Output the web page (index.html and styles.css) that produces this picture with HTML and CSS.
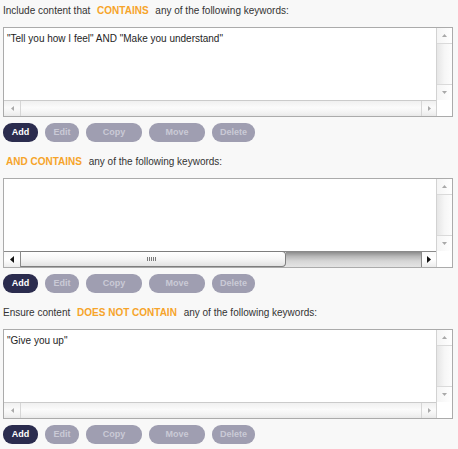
FILE: index.html
```html
<!DOCTYPE html>
<html lang="en">
<head>
<meta charset="utf-8">
<title>Keyword filters</title>
<link rel="stylesheet" href="styles.css">
</head>
<body>
<div class="page">

  <section class="filter">
    <p class="label">Include content that <span class="kw">CONTAINS</span> any of the following keywords:</p>
    <div class="box">
      <div class="text">"Tell you how I feel" AND "Make you understand"</div>
      <div class="vscroll">
        <div class="varrow up"><svg width="5" height="3" viewBox="0 0 5 3"><path d="M0 3L2.5 0L5 3Z" fill="#a9a9a9"/></svg></div>
        <div class="vtrack"></div>
        <div class="varrow down"><svg width="5" height="3" viewBox="0 0 5 3"><path d="M0 0L2.5 3L5 0Z" fill="#a9a9a9"/></svg></div>
      </div>
      <div class="hscroll">
        <div class="harrow left"><svg width="3" height="5" viewBox="0 0 3 5"><path d="M3 0L0 2.5L3 5Z" fill="#a9a9a9"/></svg></div>
        <div class="htrack"></div>
        <div class="harrow right"><svg width="3" height="5" viewBox="0 0 3 5"><path d="M0 0L3 2.5L0 5Z" fill="#a9a9a9"/></svg></div>
      </div>
      <div class="corner"></div>
    </div>
    <div class="actions">
      <button class="btn primary w-add">Add</button>
      <button class="btn w-edit">Edit</button>
      <button class="btn w-wide">Copy</button>
      <button class="btn w-wide">Move</button>
      <button class="btn w-del">Delete</button>
    </div>
  </section>

  <section class="filter">
    <p class="label"><span class="kw kw-lead">AND CONTAINS</span> any of the following keywords:</p>
    <div class="box">
      <div class="text"></div>
      <div class="vscroll">
        <div class="varrow up"><svg width="5" height="3" viewBox="0 0 5 3"><path d="M0 3L2.5 0L5 3Z" fill="#a9a9a9"/></svg></div>
        <div class="vtrack"></div>
        <div class="varrow down"><svg width="5" height="3" viewBox="0 0 5 3"><path d="M0 0L2.5 3L5 0Z" fill="#a9a9a9"/></svg></div>
      </div>
      <div class="hscroll active">
        <div class="harrow left"><svg width="4" height="7" viewBox="0 0 4 7"><path d="M4 0L0 3.5L4 7Z" fill="#111"/></svg></div>
        <div class="thumb"><span class="grip"></span></div>
        <div class="htrack dark"></div>
        <div class="harrow right"><svg width="4" height="7" viewBox="0 0 4 7"><path d="M0 0L4 3.5L0 7Z" fill="#111"/></svg></div>
      </div>
      <div class="corner"></div>
    </div>
    <div class="actions">
      <button class="btn primary w-add">Add</button>
      <button class="btn w-edit">Edit</button>
      <button class="btn w-wide">Copy</button>
      <button class="btn w-wide">Move</button>
      <button class="btn w-del">Delete</button>
    </div>
  </section>

  <section class="filter">
    <p class="label">Ensure content <span class="kw">DOES NOT CONTAIN</span> any of the following keywords:</p>
    <div class="box">
      <div class="text">"Give you up"</div>
      <div class="vscroll">
        <div class="varrow up"><svg width="5" height="3" viewBox="0 0 5 3"><path d="M0 3L2.5 0L5 3Z" fill="#a9a9a9"/></svg></div>
        <div class="vtrack"></div>
        <div class="varrow down"><svg width="5" height="3" viewBox="0 0 5 3"><path d="M0 0L2.5 3L5 0Z" fill="#a9a9a9"/></svg></div>
      </div>
      <div class="hscroll">
        <div class="harrow left"><svg width="3" height="5" viewBox="0 0 3 5"><path d="M3 0L0 2.5L3 5Z" fill="#a9a9a9"/></svg></div>
        <div class="htrack"></div>
        <div class="harrow right"><svg width="3" height="5" viewBox="0 0 3 5"><path d="M0 0L3 2.5L0 5Z" fill="#a9a9a9"/></svg></div>
      </div>
      <div class="corner"></div>
    </div>
    <div class="actions">
      <button class="btn primary w-add">Add</button>
      <button class="btn w-edit">Edit</button>
      <button class="btn w-wide">Copy</button>
      <button class="btn w-wide">Move</button>
      <button class="btn w-del">Delete</button>
    </div>
  </section>

</div>
</body>
</html>
```

FILE: styles.css
```css
html, body {
  margin: 0;
  padding: 0;
  background: #f8f8f8;
  font-family: "Liberation Sans", Arial, Helvetica, sans-serif;
}

.page {
  padding: 4px 3px 0;
}

.filter + .filter .label {
  margin-top: 13px;
}

.label {
  margin: 0 0 9px;
  font-size: 10px;
  line-height: 14px;
  color: #333;
  white-space: nowrap;
}

.kw {
  color: #f6a42a;
  font-weight: bold;
  padding: 0 4px;
}

.kw-lead {
  padding-left: 3px;
}

.box {
  display: grid;
  grid-template-columns: 1fr 16px;
  grid-template-rows: 72px 16px;
  width: 450px;
  box-sizing: border-box;
  border: 1px solid #ababab;
  background: #fff;
}

.text {
  padding: 4px 3px;
  font-size: 10px;
  line-height: 13px;
  color: #1e1e1e;
}

.vscroll {
  display: flex;
  flex-direction: column;
  border-left: 1px solid #d2d2d2;
  background: linear-gradient(90deg, #e6e6e6, #f6f6f6 50%, #fdfdfd);
}

.varrow {
  height: 15px;
  display: flex;
  align-items: center;
  justify-content: center;
  background: linear-gradient(90deg, #f4f4f4, #fff);
}

.varrow.up {
  border-bottom: 1px solid #dadada;
}

.varrow.down {
  border-top: 1px solid #dadada;
}

.vtrack {
  flex: 1;
}

.hscroll {
  display: flex;
  border-top: 1px solid #cbcbcb;
  background: linear-gradient(#f0f0f0, #fbfbfb 45%, #f2f2f2 80%, #e9e9e9);
}

.hscroll.active {
  border-top-color: #8a8a8a;
}

.harrow {
  flex: none;
  display: flex;
  align-items: center;
  justify-content: center;
}

.harrow.left {
  width: 16px;
  border-right: 1px solid #d6d6d6;
}

.harrow.right {
  width: 14px;
  border-left: 1px solid #d6d6d6;
}

.hscroll.active .harrow {
  background: linear-gradient(#fafafa, #fff 50%, #ececec);
}

.hscroll.active .harrow.left {
  border-right-color: #8a8a8a;
}

.hscroll.active .harrow.right {
  border-left-color: #8a8a8a;
}

.htrack {
  flex: 1;
}

.htrack.dark {
  background: linear-gradient(#8c8c8c, #b9b9b9 30%, #d6d6d6 60%, #e4e4e4);
}

.thumb {
  flex: none;
  width: 265px;
  box-sizing: border-box;
  margin-top: -1px;
  border: 1px solid #7e7e7e;
  border-left: none;
  border-radius: 0 4px 4px 0;
  background: linear-gradient(#fff, #f6f6f6 50%, #e2e2e2);
  display: flex;
  align-items: center;
  padding-left: 126px;
}

.grip {
  width: 9px;
  height: 4px;
  background: repeating-linear-gradient(90deg, #7a7a7a 0 1px, transparent 1px 2px);
}

.corner {
  border-left: 1px solid #d2d2d2;
  background: #fff;
}

.actions {
  display: flex;
  gap: 7px;
  margin-top: 6px;
}

.btn {
  height: 19px;
  padding: 0;
  border: none;
  border-radius: 9px;
  background: #9f9eb1;
  color: #cacad6;
  font-family: "Liberation Sans", Arial, Helvetica, sans-serif;
  font-size: 9px;
  font-weight: bold;
  line-height: 19px;
  text-align: center;
}

.btn.primary {
  background: #2b2c4e;
  color: #fff;
}

.w-add { width: 35px; }
.w-edit { width: 34px; }
.w-wide { width: 56px; }
.w-del { width: 43px; }
```
